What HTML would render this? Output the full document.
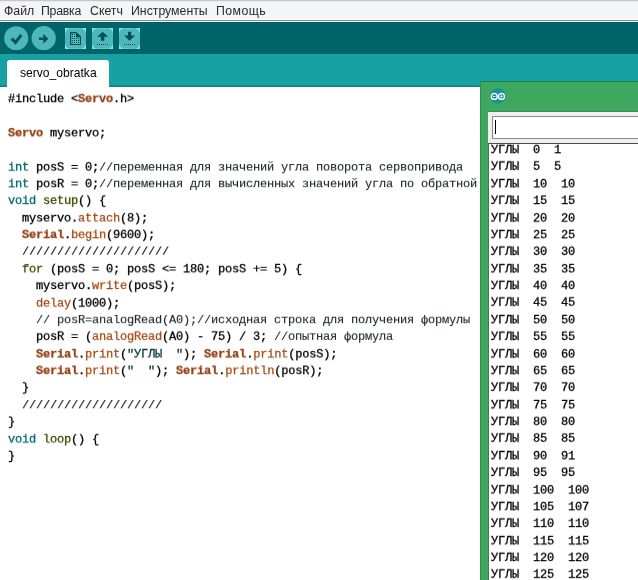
<!DOCTYPE html>
<html><head><meta charset="utf-8">
<style>
html,body{margin:0;padding:0;}
body{width:638px;height:580px;overflow:hidden;position:relative;background:#fff;font-family:"Liberation Sans",sans-serif;}
.abs{position:absolute;}
#menubar{left:0;top:0;width:638px;height:22px;background:linear-gradient(#c6c6c6 0,#c9c9c9 1px,#eeeff0 1.6px,#f4f5f6 2.4px,#f4f5f6 18.8px,#fff 19px,#fff 19.8px,#8c8c8c 20px,#8c8c8c 21px,#f6fbfb 21.1px,#e8f4f4 22px);}
#menubar span{will-change:transform;position:absolute;top:4px;font-size:12.3px;line-height:15px;color:#2a2a2a;white-space:pre;}
#toolbar{left:0;top:22px;width:638px;height:32px;background:#006468;box-shadow:inset 0 1px 0 #00585c;}
#tabbar{left:0;top:54px;width:638px;height:33px;background:linear-gradient(#17a1a5 0,#17a1a5 31px,#14888c 31.6px,#127f83 33px);}
#tab{left:7px;top:60px;width:102px;height:27px;background:#fff;border-radius:3px 3px 0 0;}
#tab span{will-change:transform;position:absolute;left:12.6px;top:6.4px;font-size:12.1px;color:#000;}
#icons{left:0;top:22px;}
pre{margin:0;will-change:transform;font-family:"Liberation Mono",monospace;font-size:12px;letter-spacing:-0.2px;line-height:18.3784px;color:#000;-webkit-text-stroke:0.3px;transform:scaleY(0.925);transform-origin:0 0;}
#code{left:8px;top:91px;}
.k1{color:#96441a;font-weight:bold;}
.k2{color:#a94d18;}
.k3{color:#414c00;}
.t{color:#00686d;}
.c{color:#23292c;-webkit-text-stroke:0.12px;}
.c2{color:#15191b;-webkit-text-stroke:0.22px;}
.s{color:#003437;}
#mon{left:480px;top:81px;width:158px;height:499px;background:#3ea85f;border-left:1px solid #2c8f4f;border-top:1px solid #1f7d48;box-sizing:border-box;}
#monin{left:488px;top:111px;width:150px;height:469px;background:#efefef;border-top:1px solid #348f55;box-sizing:border-box;}
#input{left:492px;top:116px;width:146px;height:23px;border:1px solid #8a8a8a;border-right:none;background:#fff;box-sizing:border-box;}
#caret{left:495px;top:120px;width:1px;height:14px;background:#000;}
#ta{left:488px;top:143px;width:150px;height:437px;background:#fff;border-left:1px solid #5b6a60;border-top:1px solid #4c4c4c;box-sizing:border-box;}
#out{left:491px;top:141.6px;}
</style></head><body>
<div id="menubar" class="abs"><span style="left:3.8px">Файл</span><span style="left:40.8px;letter-spacing:-0.25px">Правка</span><span style="left:89.8px">Скетч</span><span style="left:130.8px">Инструменты</span><span style="left:216px;letter-spacing:0.45px">Помощь</span></div>
<div id="toolbar" class="abs"></div>
<svg id="icons" class="abs" width="160" height="32" viewBox="0 22 160 32">
<ellipse cx="16.2" cy="51.6" rx="4" ry="1.3" fill="#005a5e"/>
<ellipse cx="43.7" cy="51.6" rx="4" ry="1.3" fill="#005a5e"/>
<circle cx="16.2" cy="38.2" r="12" fill="#4db7bb"/>
<circle cx="43.7" cy="38.2" r="12.1" fill="#4db7bb"/>
<path d="M11.6 38.6 L15.5 42.4 L21.3 34.9" fill="none" stroke="#00545a" stroke-width="3" stroke-linejoin="miter"/>
<path d="M39 37.4 H43.3 V33.8 L48.3 38.7 L43.3 43.8 V40.1 H39 Z" fill="#00545a"/>
<g id="sq1">
<rect x="65" y="28" width="21" height="21" fill="#86e6e9"/>
<rect x="65" y="28" width="21" height="21" rx="6" fill="#4db7bb"/>
</g>
<g>
<rect x="92" y="28" width="21" height="21" fill="#86e6e9"/>
<rect x="92" y="28" width="21" height="21" rx="6" fill="#4db7bb"/>
</g>
<g>
<rect x="119" y="28" width="21" height="21" fill="#86e6e9"/>
<rect x="119" y="28" width="21" height="21" rx="6" fill="#4db7bb"/>
</g>
<rect x="71" y="28" width="8" height="1" fill="#7fe1e4" opacity="0.45"/><rect x="71" y="48" width="8" height="1" fill="#7fe1e4" opacity="0.45"/><rect x="98" y="28" width="8" height="1" fill="#7fe1e4" opacity="0.45"/><rect x="98" y="48" width="8" height="1" fill="#7fe1e4" opacity="0.45"/><rect x="125" y="28" width="8" height="1" fill="#7fe1e4" opacity="0.45"/><rect x="125" y="48" width="8" height="1" fill="#7fe1e4" opacity="0.45"/>
<path d="M70 32 H76.2 L81 36.6 V45 H70 Z" fill="#004a4e"/>
<path d="M71.2 33.2 H76 V37.2 H79.9 V43.9 H71.2 Z" fill="#55bcc0"/>
<g fill="#004a4e">
<rect x="72" y="34" width="1" height="1"/><rect x="74" y="34" width="1" height="1"/>
<rect x="72" y="36" width="1" height="1"/><rect x="74" y="36" width="1" height="1"/>
<rect x="72" y="38" width="1" height="1"/><rect x="74" y="38" width="1" height="1"/><rect x="76" y="38" width="1" height="1"/><rect x="78" y="38" width="1" height="1"/>
<rect x="72" y="40" width="1" height="1"/><rect x="74" y="40" width="1" height="1"/><rect x="76" y="40" width="1" height="1"/><rect x="78" y="40" width="1" height="1"/>
<rect x="72" y="42" width="1" height="1"/><rect x="74" y="42" width="1" height="1"/><rect x="76" y="42" width="1" height="1"/><rect x="78" y="42" width="1" height="1"/>
</g>
<path d="M102.6 31.7 L108.1 36.7 H104.3 V40.8 H100.9 V36.7 H97.2 Z" fill="#004f53"/>
<g fill="#004a4e">
<rect x="97" y="44" width="1" height="1"/><rect x="99" y="44" width="1" height="1"/><rect x="101" y="44" width="1" height="1"/><rect x="103" y="44" width="1" height="1"/><rect x="105" y="44" width="1" height="1"/><rect x="107" y="44" width="1" height="1"/>
</g>
<path d="M128 31.8 H131.2 V35.6 H135 L129.5 40.8 L124.1 35.6 H128 Z" fill="#004f53"/>
<g fill="#004a4e">
<rect x="124" y="44" width="1" height="1"/><rect x="126" y="44" width="1" height="1"/><rect x="128" y="44" width="1" height="1"/><rect x="130" y="44" width="1" height="1"/><rect x="132" y="44" width="1" height="1"/><rect x="134" y="44" width="1" height="1"/>
</g>
</svg>
<div id="tabbar" class="abs"></div>
<div id="tab" class="abs"><span>servo_obratka</span></div>
<pre id="code" class="abs">#include &lt;<span class="k1">Servo</span>.h&gt;

<span class="k1">Servo</span> myservo;

<span class="t">int</span> posS = 0;<span class="c">//переменная для значений угла поворота сервопривода</span>
<span class="t">int</span> posR = 0;<span class="c">//переменная для вычисленных значений угла по обратной</span>
<span class="t">void</span> <span class="k3">setup</span>() {
  myservo.<span class="k2">attach</span>(8);
  <span class="k1">Serial</span>.<span class="k2">begin</span>(9600);
  <span class="c2">/////////////////////</span>
  <span class="k3">for</span> (posS = 0; posS &lt;= 180; posS += 5) {
    myservo.<span class="k2">write</span>(posS);
    <span class="k2">delay</span>(1000);
    <span class="c">// posR=analogRead(A0);//исходная строка для получения формулы</span>
    posR = (<span class="k2">analogRead</span>(A0) - 75) / 3; <span class="c">//опытная формула</span>
    <span class="k1">Serial</span>.<span class="k2">print</span>(<span class="s">"УГЛЫ  "</span>); <span class="k1">Serial</span>.<span class="k2">print</span>(posS);
    <span class="k1">Serial</span>.<span class="k2">print</span>(<span class="s">"  "</span>); <span class="k1">Serial</span>.<span class="k2">println</span>(posR);
  }
  <span class="c2">////////////////////</span>
}
<span class="t">void</span> <span class="k3">loop</span>() {
}</pre>
<div id="mon" class="abs"></div>
<svg class="abs" style="left:489px;top:87px" width="18" height="18" viewBox="0 0 18 18">
<circle cx="8.8" cy="9" r="7.7" fill="#12959a"/>
<circle cx="5.3" cy="9.4" r="2.9" fill="#0c7e83" stroke="#fff" stroke-width="1.4"/>
<circle cx="12.5" cy="9.4" r="2.9" fill="#0c7e83" stroke="#fff" stroke-width="1.4"/>
<rect x="4.1" y="8.9" width="2.4" height="1" fill="#fff"/>
<rect x="11.3" y="8.9" width="2.4" height="1" fill="#fff"/>
<rect x="12" y="8.2" width="1" height="2.4" fill="#fff"/>
</svg>
<div id="monin" class="abs"></div>
<div id="input" class="abs"></div>
<div id="caret" class="abs"></div>
<div id="ta" class="abs"></div>
<pre id="out" class="abs">УГЛЫ  0  1
УГЛЫ  5  5
УГЛЫ  10  10
УГЛЫ  15  15
УГЛЫ  20  20
УГЛЫ  25  25
УГЛЫ  30  30
УГЛЫ  35  35
УГЛЫ  40  40
УГЛЫ  45  45
УГЛЫ  50  50
УГЛЫ  55  55
УГЛЫ  60  60
УГЛЫ  65  65
УГЛЫ  70  70
УГЛЫ  75  75
УГЛЫ  80  80
УГЛЫ  85  85
УГЛЫ  90  91
УГЛЫ  95  95
УГЛЫ  100  100
УГЛЫ  105  107
УГЛЫ  110  110
УГЛЫ  115  115
УГЛЫ  120  120
УГЛЫ  125  125
УГЛЫ  130  130</pre>
</body></html>
